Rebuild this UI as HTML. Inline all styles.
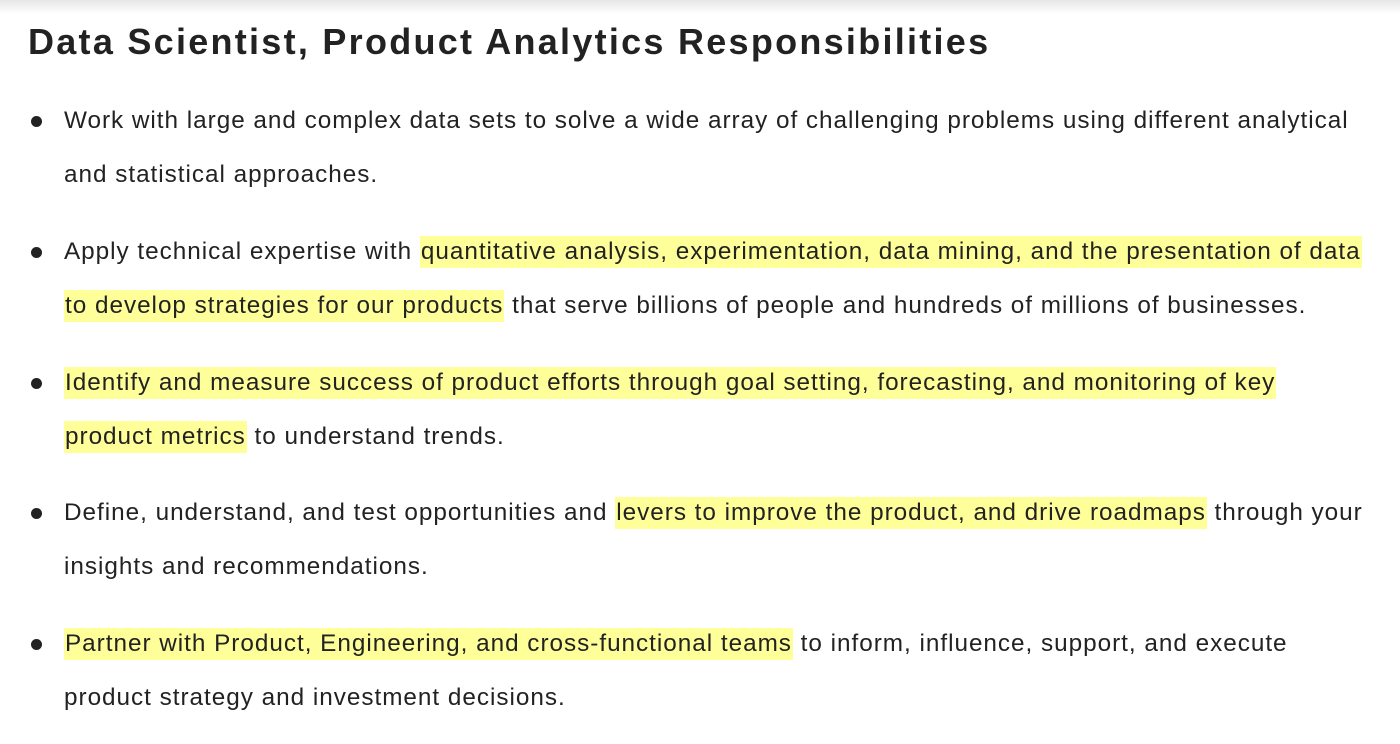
<!DOCTYPE html>
<html><head><style>
body{margin:0;width:1400px;height:744px;background:#fff;overflow:hidden;font-family:"Liberation Sans",Arial,sans-serif;color:#222;position:relative}
.sh{position:absolute;left:0;top:0;width:1400px;height:14px;background:linear-gradient(#e6e6e6,#fff)}
h1{position:absolute;left:28px;top:19px;margin:0;font-size:36px;font-weight:bold;letter-spacing:2.27px;line-height:46px;white-space:nowrap}
.it{position:absolute;left:64px;font-size:24.3px;line-height:54px;white-space:nowrap;letter-spacing:0.98px}
.it:before{content:"";position:absolute;left:-33px;top:22px;width:11px;height:11px;border-radius:50%;background:#222}
mark{background:#ffff99;color:#222;padding:2px 1px 3px}
</style></head><body>
<div class="sh"></div>
<h1>Data Scientist, Product Analytics Responsibilities</h1>
<div class="it" style="top:94px">Work with large and complex data sets to solve a wide array of challenging problems using different analytical<br>and statistical approaches.</div>
<div class="it" style="top:225px">Apply technical expertise with <mark>quantitative analysis, experimentation, data mining, and the presentation of data</mark><br><mark>to develop strategies for our products</mark> that serve billions of people and hundreds of millions of businesses.</div>
<div class="it" style="top:356px"><mark>Identify and measure success of product efforts through goal setting, forecasting, and monitoring of key</mark><br><mark>product metrics</mark> to understand trends.</div>
<div class="it" style="top:486px">Define, understand, and test opportunities and <mark>levers to improve the product, and drive roadmaps</mark> through your<br>insights and recommendations.</div>
<div class="it" style="top:617px"><mark>Partner with Product, Engineering, and cross-functional teams</mark> to inform, influence, support, and execute<br>product strategy and investment decisions.</div>
</body></html>
